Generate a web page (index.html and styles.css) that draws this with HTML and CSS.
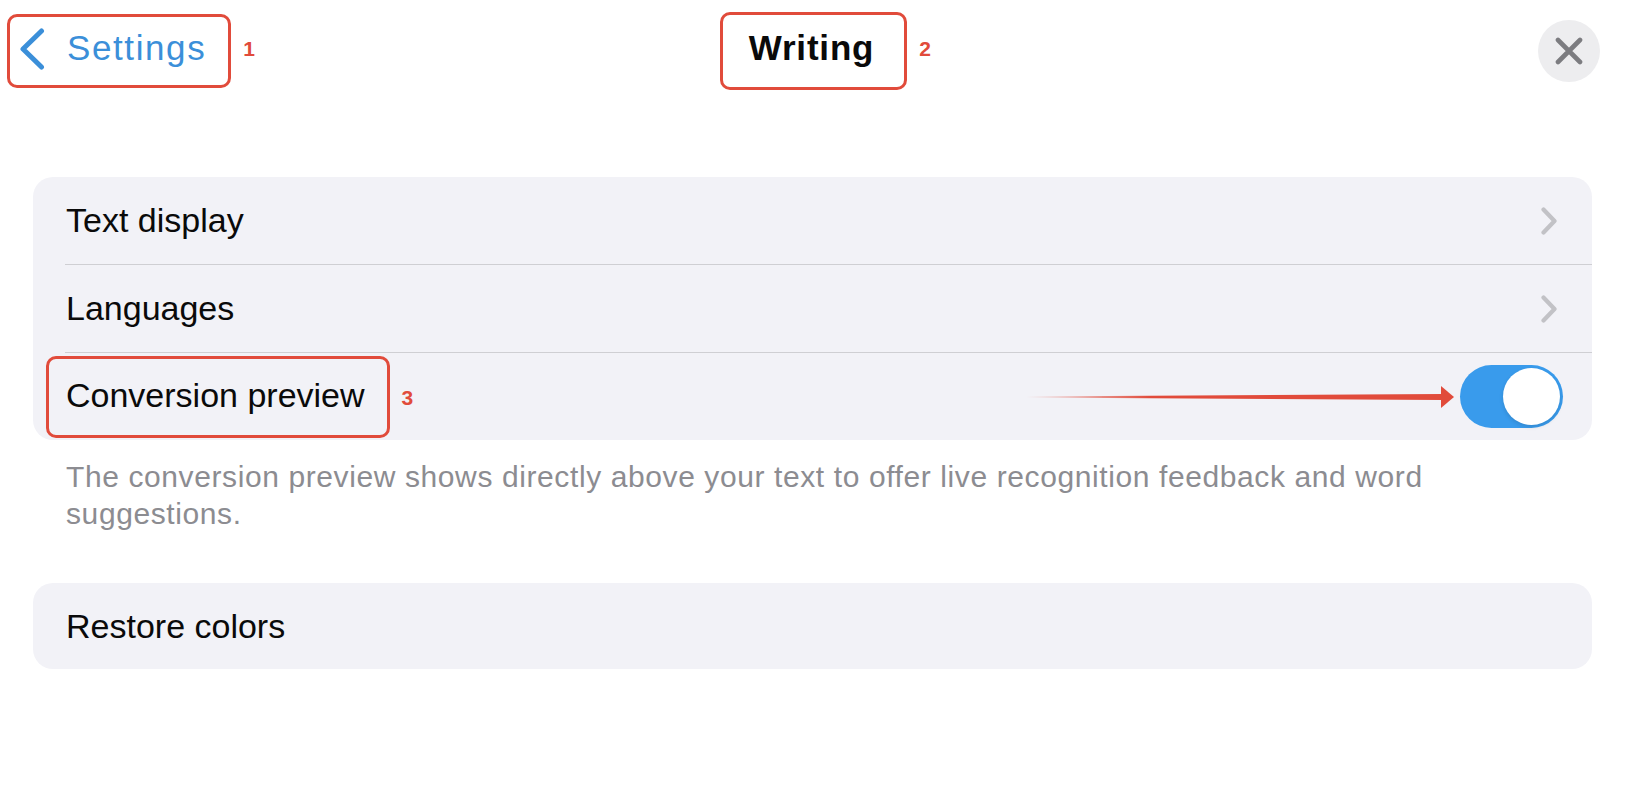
FILE: index.html
```html
<!DOCTYPE html>
<html lang="en">
<head>
<meta charset="utf-8">
<title>Writing</title>
<link rel="stylesheet" href="styles.css">
</head>
<body>
<header class="nav">
  <div class="nav-left">
    <a class="back annot" href="#">
      <svg class="back-icon" width="26" height="42" viewBox="0 0 26 42"><path d="M22.5 3 L4 21 L22.5 39" fill="none" stroke="currentColor" stroke-width="5" stroke-linecap="round" stroke-linejoin="round"/></svg>
      <span class="back-label">Settings</span>
      <span class="annot-num">1</span>
    </a>
  </div>
  <h1 class="title annot">Writing<span class="annot-num">2</span></h1>
  <div class="nav-right">
    <button class="close" type="button" aria-label="Close">
      <svg width="28" height="28" viewBox="0 0 28 28"><path d="M3 3 L25 25 M25 3 L3 25" fill="none" stroke="#7c7c80" stroke-width="4.6" stroke-linecap="round"/></svg>
    </button>
  </div>
</header>

<main>
  <section class="group group-top">
    <div class="row">
      <span class="label">Text display</span>
      <svg class="chev" width="16" height="28" viewBox="0 0 16 28"><path d="M2.5 2.5 L13.5 14 L2.5 25.5" fill="none" stroke="#c2c2c6" stroke-width="4.2" stroke-linecap="round" stroke-linejoin="round"/></svg>
    </div>
    <div class="divider"></div>
    <div class="row">
      <span class="label">Languages</span>
      <svg class="chev" width="16" height="28" viewBox="0 0 16 28"><path d="M2.5 2.5 L13.5 14 L2.5 25.5" fill="none" stroke="#c2c2c6" stroke-width="4.2" stroke-linecap="round" stroke-linejoin="round"/></svg>
    </div>
    <div class="divider"></div>
    <div class="row row-toggle">
      <span class="label annot label-annot">Conversion preview<span class="annot-num">3</span></span>
      <svg class="arrow" width="428" height="24" viewBox="0 0 428 24">
        <defs>
          <linearGradient id="fade" x1="0" x2="1" y1="0" y2="0">
            <stop offset="0" stop-color="#e14b3b" stop-opacity="0"/>
            <stop offset="0.3" stop-color="#e14b3b" stop-opacity="1"/>
            <stop offset="1" stop-color="#e14b3b" stop-opacity="1"/>
          </linearGradient>
        </defs>
        <polygon points="0,11.5 416,9 416,15 0,12.5" fill="url(#fade)"/>
        <polygon points="415,1 428,12 415,23" fill="#e14b3b"/>
      </svg>
      <span class="toggle"><span class="knob"></span></span>
    </div>
  </section>
  <p class="footnote">The conversion preview shows directly above your text to offer live recognition feedback and word suggestions.</p>

  <section class="group group-bottom">
    <div class="row row-single">
      <span class="label">Restore colors</span>
    </div>
  </section>
</main>
</body>
</html>
```

FILE: styles.css
```css
* { box-sizing: border-box; }

html, body {
  margin: 0;
  background: #ffffff;
}

body {
  width: 1625px;
  height: 791px;
  overflow: hidden;
  font-family: "Liberation Sans", Arial, sans-serif;
  color: #0a0a0a;
}

/* ---------- annotation overlays ---------- */
.annot {
  position: relative;
  border: 3px solid #e14b3b;
  border-radius: 10px;
}

.annot-num {
  position: absolute;
  left: 100%;
  top: 50%;
  margin-left: 15px;
  transform: translateY(-50%);
  color: #e14b3b;
  font-family: "Liberation Sans", Arial, sans-serif;
  font-weight: bold;
  font-size: 21px;
  letter-spacing: 0;
  line-height: 1;
}

/* ---------- navigation bar ---------- */
.nav {
  display: grid;
  grid-template-columns: 1fr auto 1fr;
  align-items: center;
  height: 78px;
  margin-top: 12px;
  padding: 0 25px 0 7px;
}

.nav-left { justify-self: start; }
.nav-right { justify-self: end; display: flex; }

.back {
  display: flex;
  align-items: center;
  gap: 22px;
  height: 74px;
  padding: 0 22px 7px 9px;
  color: #3b8fd9;
  text-decoration: none;
  font-size: 35px;
  letter-spacing: 1.6px;
}

.back-icon {
  display: block;
  margin-top: 3px;
}

.back .annot-num { margin-top: -3px; }

.title {
  margin: 0 0 0 20px;
  height: 78px;
  display: flex;
  align-items: center;
  padding: 0 30px 6px 26px;
  font-size: 35px;
  font-weight: bold;
  letter-spacing: 0.8px;
  color: #0a0a0a;
}

.title .annot-num { margin-top: -3px; }

.close {
  width: 62px;
  height: 62px;
  padding: 0;
  border: none;
  border-radius: 50%;
  background: #ededef;
  display: flex;
  align-items: center;
  justify-content: center;
}

.close svg { display: block; }

/* ---------- grouped lists ---------- */
.group {
  margin: 0 33px;
  background: #f2f2f7;
  border-radius: 20px;
}

.group-top { margin-top: 87px; }
.group-bottom { margin-top: 51px; }

.row {
  display: flex;
  align-items: center;
  height: 87px;
  padding: 0 35px 0 33px;
  font-size: 34px;
}

.row .label { flex: 1; }

.chev { display: block; margin-top: 1px; }

.divider {
  height: 1px;
  margin-left: 32px;
  background: #cfcfd3;
}

.row-toggle {
  position: relative;
  padding: 0 29px 0 13px;
}

.label-annot.annot {
  flex: 0 0 auto;
  display: flex;
  align-items: center;
  height: 82px;
  padding: 0 22px 3px 17px;
}

.arrow {
  position: absolute;
  right: 138px;
  top: 50%;
  margin-top: -12px;
  display: block;
}

.row-toggle::before {
  content: "";
  flex: 1;
}

.toggle {
  width: 103px;
  height: 63px;
  border-radius: 32px;
  background: #399bec;
  display: flex;
  justify-content: flex-end;
  align-items: center;
  padding: 3px;
}

.row-toggle .toggle { order: 3; }
.row-toggle .label-annot { order: 0; }
.row-toggle::before { order: 2; }

.knob {
  width: 57px;
  height: 57px;
  border-radius: 50%;
  background: #ffffff;
  box-shadow: 0 2px 4px rgba(0, 0, 0, 0.12);
}

.row-single { height: 86px; }

/* ---------- footnote ---------- */
.footnote {
  margin: 18px 33px 0 66px;
  font-size: 30px;
  line-height: 37px;
  letter-spacing: 0.6px;
  color: #8c8c91;
}
```
